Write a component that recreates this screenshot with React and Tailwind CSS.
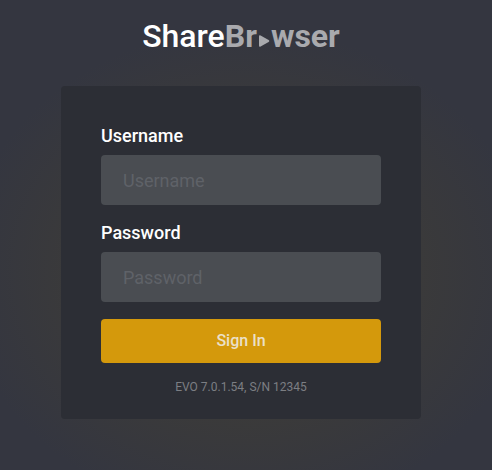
export default function App() {
  return (
    <div
      className="min-h-[470px] w-full flex flex-col items-center pr-[10px] bg-[radial-gradient(ellipse_58%_52%_at_50%_58%,#3f3e39_0%,#3c3b39_50%,#343640_100%)]"
      style={{ fontFamily: "Roboto, 'Liberation Sans', sans-serif" }}
    >
      <h1 className="mt-[16px] h-[40px] text-[32px] leading-[40px]">
        <span className="font-medium text-white">Share</span>
        <span className="font-bold text-[#a9aaae]">
          Br
          <svg
            width="14"
            height="12"
            viewBox="0 0 14 12"
            className="inline-block align-baseline"
          >
            <path
              d="M3.6 0.4 Q2 -0.4 2 1.4 L2 10.6 Q2 12.4 3.6 11.6 L11.6 7 Q13 6 11.6 5 Z"
              fill="#a9aaae"
            />
          </svg>
          wser
        </span>
      </h1>
      <div className="mt-[30px] w-[360px] rounded-[4px] bg-[#2c2e35] px-[40px] pt-[38px] pb-[24px]">
        <label className="block text-[18px] leading-[24px] font-medium text-white">Username</label>
        <input
          type="text"
          placeholder="Username"
          className="mt-[7px] block w-full h-[50px] rounded-[4px] bg-[#4a4d52] px-[22px] text-[18px] text-white placeholder:text-[#5f6268] outline-none"
        />
        <label className="mt-[16px] block text-[18px] leading-[24px] font-medium text-white">Password</label>
        <input
          type="password"
          placeholder="Password"
          className="mt-[7px] block w-full h-[50px] rounded-[4px] bg-[#4a4d52] px-[22px] text-[18px] text-white placeholder:text-[#5f6268] outline-none"
        />
        <button className="mt-[17px] block w-full h-[44px] rounded-[4px] bg-[#d4990c] text-[16px] font-medium text-[#ebe0c8]">
          Sign In
        </button>
        <p className="mt-[16px] text-center text-[12px] leading-[16px] text-[#7c7e83]">
          EVO 7.0.1.54, S/N 12345
        </p>
      </div>
    </div>
  );
}
